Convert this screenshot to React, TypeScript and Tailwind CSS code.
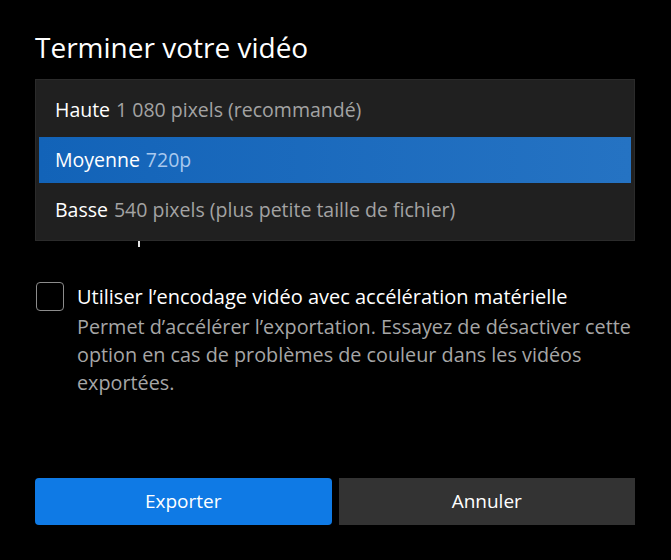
import React, { useState } from 'react';

const options = [
  { id: 'high', label: 'Haute', detail: '1 080 pixels (recommandé)' },
  { id: 'medium', label: 'Moyenne', detail: '720p' },
  { id: 'low', label: 'Basse', detail: '540 pixels (plus petite taille de fichier)' },
];

const App: React.FC = () => {
  const [quality, setQuality] = useState('medium');
  const [hwAccel, setHwAccel] = useState(false);

  return (
    <div
      className="w-[671px] h-[560px] bg-black text-white overflow-hidden"
      style={{ fontFamily: '"Open Sans", "Noto Sans", sans-serif' }}
    >
      <div className="w-[600px] ml-[35px] pt-[29px] flex flex-col">
        <h1 className="text-[28px] leading-[36px] font-normal">Terminer votre vidéo</h1>

        {/* quality dropdown, open */}
        <div className="relative mt-[14px]">
          <span className="absolute left-[103px] top-[162px] w-[2px] h-[6px] bg-[#e5e5e5]" />
          <div className="relative bg-[#202020] border border-[#2b2b2b] px-[3px] py-[7px] flex flex-col gap-[4px]">
            {options.map((o) => {
              const active = o.id === quality;
              return (
                <button
                  key={o.id}
                  onClick={() => setQuality(o.id)}
                  className={`h-[46px] pl-[16px] flex items-center text-left text-[19.5px] ${
                    active ? 'bg-gradient-to-r from-[#1263b8] to-[#2573c3]' : ''
                  }`}
                >
                  <span className="text-white">{o.label}</span>
                  <span className={`ml-[6px] ${active ? 'text-[#a9c9ee]' : 'text-[#a3a3a3]'}`}>{o.detail}</span>
                </button>
              );
            })}
          </div>
        </div>

        {/* hardware acceleration */}
        <div className="mt-[41px] flex items-start">
          <button
            onClick={() => setHwAccel(!hwAccel)}
            className="w-[28px] h-[29px] ml-px shrink-0 rounded-[4px] border border-[#8c8c8c] bg-transparent"
          />
          <div className="ml-[13px] flex flex-col">
            <span className="text-[20px] leading-[29px]">Utiliser l’encodage vidéo avec accélération matérielle</span>
            <p className="text-[19.8px] leading-[28px] text-[#a6a6a6] mt-[2px] whitespace-nowrap">
              Permet d’accélérer l’exportation. Essayez de désactiver cette
              <br />
              option en cas de problèmes de couleur dans les vidéos
              <br />
              exportées.
            </p>
          </div>
        </div>

        <div className="mt-[81px] flex gap-[7px]">
          <button className="flex-1 h-[47px] rounded-[4px] bg-[#0f7ae5] text-[19px] text-white">Exporter</button>
          <button className="flex-1 h-[47px] bg-[#333333] text-[19px] text-white">Annuler</button>
        </div>
      </div>
    </div>
  );
};

export default App;
